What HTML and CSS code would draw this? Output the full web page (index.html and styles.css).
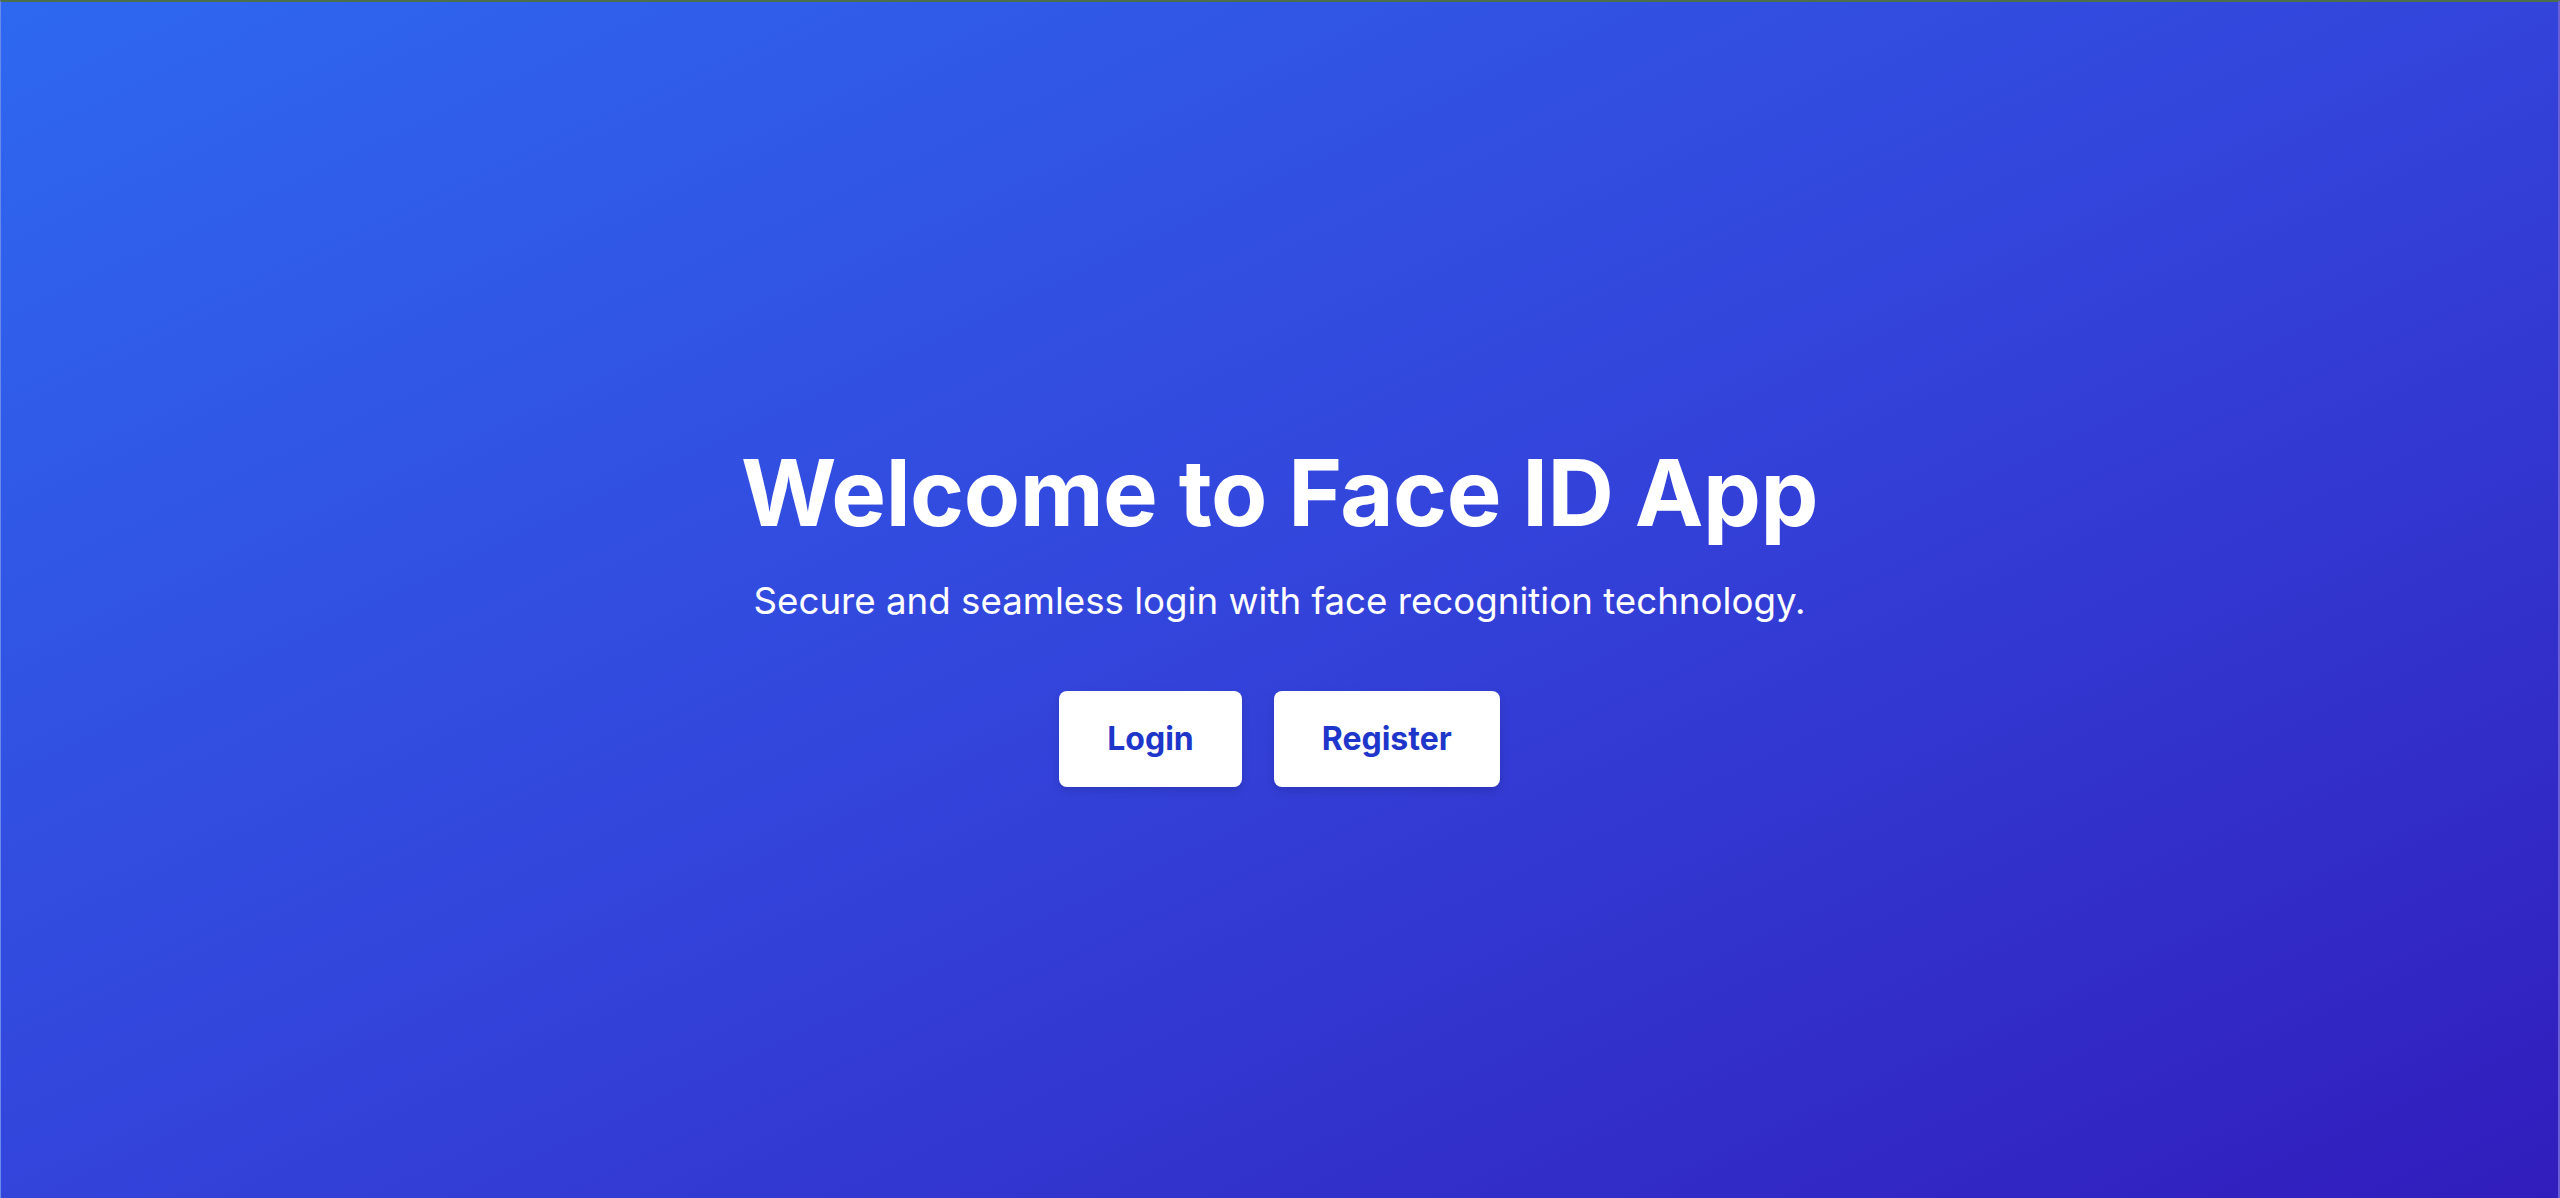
FILE: index.html
```html
<!DOCTYPE html>
<html lang="en">
<head>
<meta charset="utf-8">
<title>Face ID App</title>
<link rel="stylesheet" href="styles.css">
</head>
<body>
<main class="page">
  <section class="hero">
    <h1 class="title">Welcome to Face ID App</h1>
    <p class="subtitle">Secure and seamless login with face recognition technology.</p>
    <div class="actions">
      <a class="btn" href="#">Login</a>
      <a class="btn" href="#">Register</a>
    </div>
  </section>
</main>
</body>
</html>
```

FILE: styles.css
```css
* { box-sizing: border-box; }
html, body { margin: 0; padding: 0; height: 100%; }
body {
  font-family: Inter, "Noto Sans", sans-serif;
}
.page {
  height: 1198px;
  width: 100%;
  background: linear-gradient(to bottom right, #2e68f0 0%, #3344db 50%, #311dbc 100%);
  border-top: 2px solid #4b6e4c;
  border-left: 1px solid #6b8af0;
  border-right: 2px solid #6a5fd6;
  display: flex;
  align-items: center;
  justify-content: center;
}
.hero {
  display: flex;
  flex-direction: column;
  align-items: center;
  text-align: center;
  color: #fff;
  padding-top: 34px;
}
.title {
  margin: 0;
  font-size: 92px;
  font-weight: 700;
  line-height: 92px;
  letter-spacing: -0.5px;
}
.subtitle {
  margin: 38px 0 0;
  font-size: 36.7px;
  font-weight: 400;
  line-height: 48px;
}
.actions {
  display: flex;
  gap: 32px;
  margin-top: 66px;
}
.btn {
  display: block;
  background: #fff;
  color: #1e36c9;
  text-decoration: none;
  font-size: 32px;
  font-weight: 700;
  line-height: 48px;
  padding: 24px 48px;
  border-radius: 8px;
  box-shadow: 0 4px 8px rgba(0,0,0,0.12);
}
```
